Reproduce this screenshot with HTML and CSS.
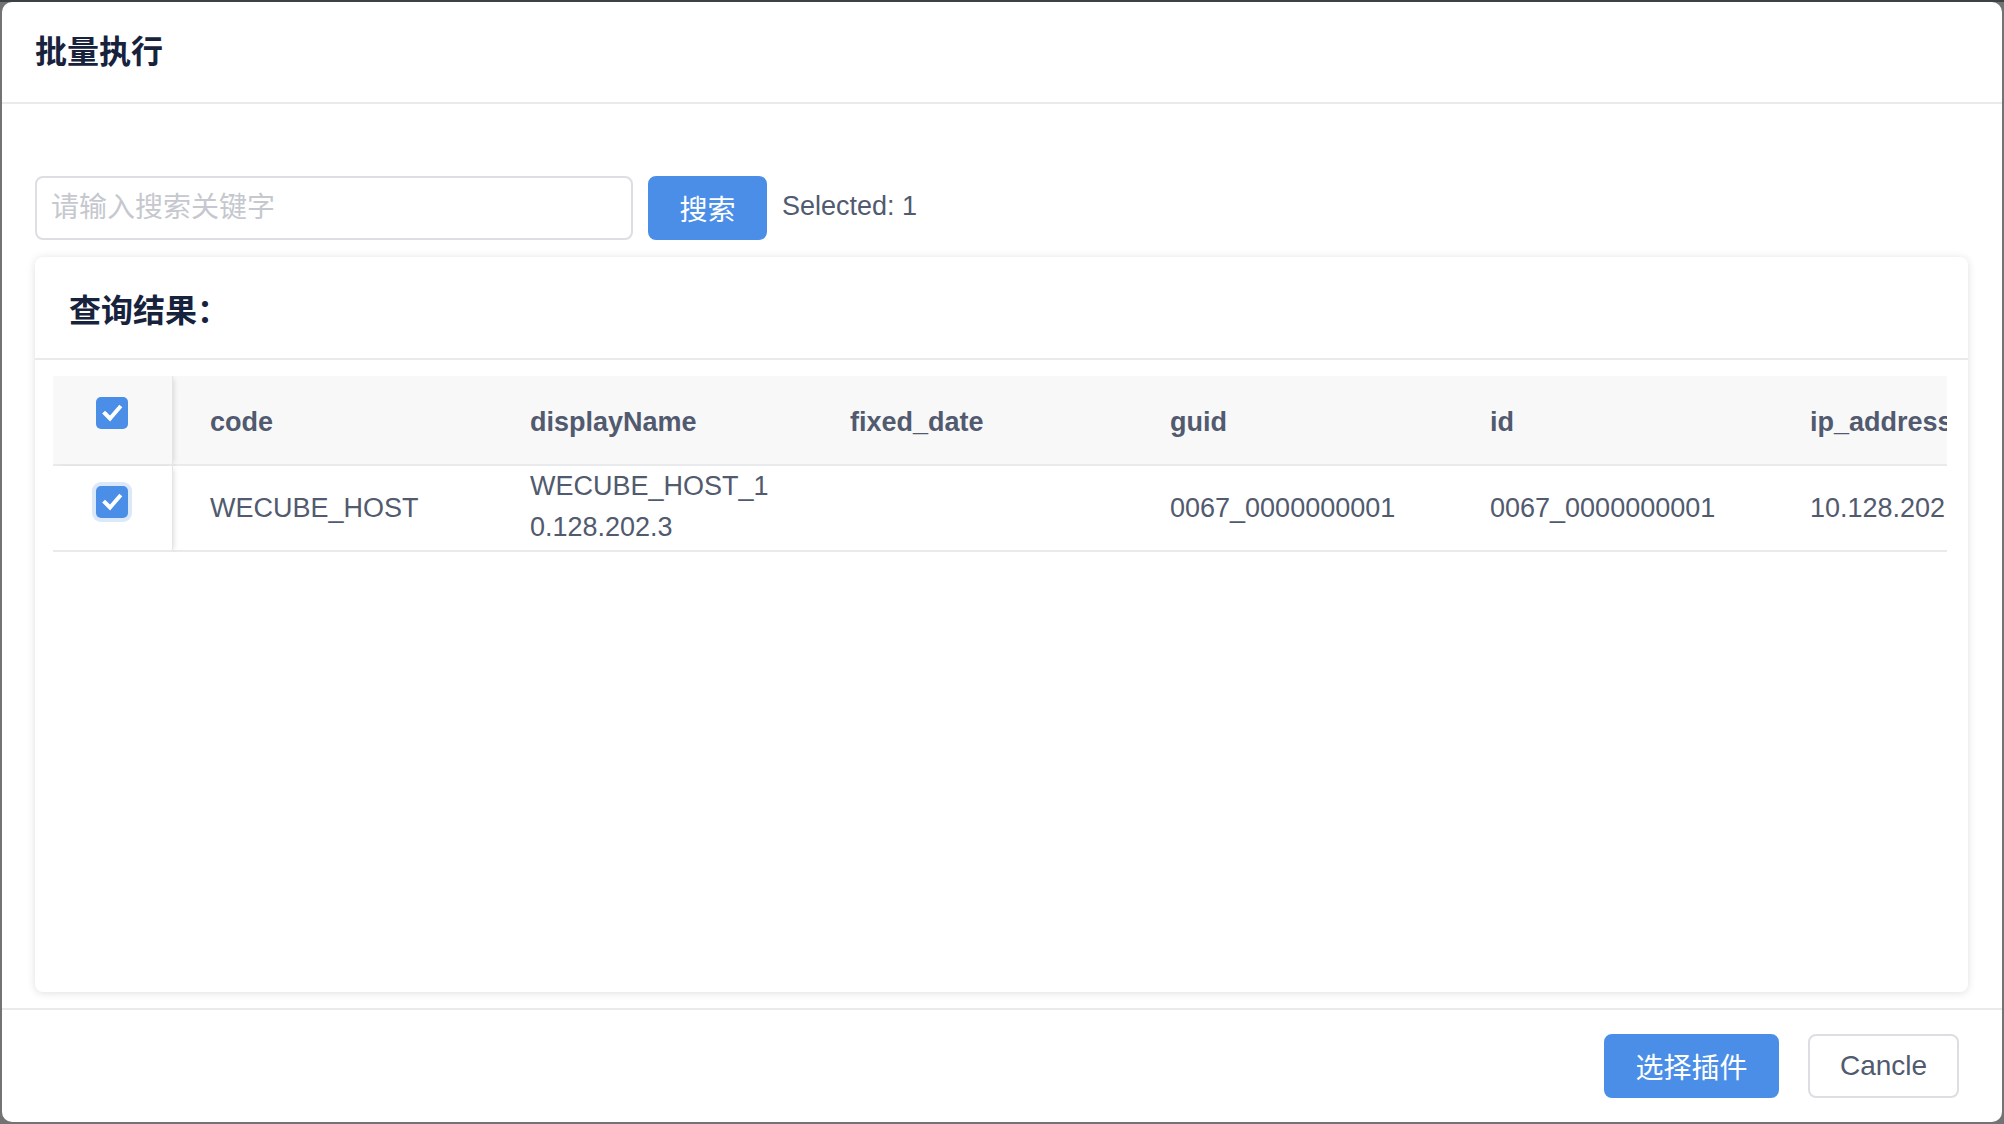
FILE: index.html
```html
<!DOCTYPE html>
<html lang="zh-CN">
<head>
<meta charset="utf-8">
<title>批量执行</title>
<link rel="stylesheet" href="styles.css">
</head>
<body>
<div class="modal">
  <div class="modal-header">
    <div class="modal-title">批量执行</div>
  </div>
  <div class="modal-body">
    <div class="search-row">
      <input class="search-input" type="text" placeholder="请输入搜索关键字">
      <button class="btn btn-primary btn-search">搜索</button>
      <span class="selected">Selected: 1</span>
    </div>
    <div class="card">
      <div class="card-head">查询结果：</div>
      <div class="card-body">
        <div class="table-wrap">
          <table class="table">
            <colgroup>
              <col class="col-sel">
              <col class="col-data"><col class="col-data"><col class="col-data">
              <col class="col-data"><col class="col-data"><col class="col-data">
            </colgroup>
            <thead>
              <tr>
                <th class="sel"><span class="checkbox"><svg viewBox="0 0 32 32" width="32" height="32"><path d="M9 16.5 L14 21.5 L23.5 10.5" fill="none" stroke="#fff" stroke-width="4" stroke-linecap="square"/></svg></span></th>
                <th>code</th>
                <th>displayName</th>
                <th>fixed_date</th>
                <th>guid</th>
                <th>id</th>
                <th>ip_address</th>
              </tr>
            </thead>
            <tbody>
              <tr>
                <td class="sel"><span class="checkbox focused"><svg viewBox="0 0 32 32" width="32" height="32"><path d="M9 16.5 L14 21.5 L23.5 10.5" fill="none" stroke="#fff" stroke-width="4" stroke-linecap="square"/></svg></span></td>
                <td>WECUBE_HOST</td>
                <td class="wrap">WECUBE_HOST_1<br>0.128.202.3</td>
                <td></td>
                <td>0067_0000000001</td>
                <td>0067_0000000001</td>
                <td>10.128.202.3</td>
              </tr>
            </tbody>
          </table>
        </div>
      </div>
    </div>
  </div>
  <div class="modal-footer">
    <button class="btn btn-primary btn-ok">选择插件</button>
    <button class="btn btn-default btn-cancel">Cancle</button>
  </div>
</div>
</body>
</html>
```
FILE: styles.css
```css
html, body {
  margin: 0;
  padding: 0;
}
body {
  background: #737373;
  border-top: 2px solid #3d4145;
  padding: 0 2px 2px 2px;
  font-family: "Liberation Sans", "Noto Sans CJK SC", sans-serif;
  color: #515a6e;
  overflow: hidden;
}
.modal {
  width: 2000px;
  height: 1120px;
  background: #fff;
  border-radius: 10px;
  display: flex;
  flex-direction: column;
  overflow: hidden;
}
.modal-header {
  height: 100px;
  border-bottom: 2px solid #e8eaec;
  display: flex;
  align-items: center;
  padding-left: 33px;
  flex: none;
}
.modal-title {
  font-size: 32px;
  font-weight: 600;
  color: #17233d;
  line-height: 1;
}
.modal-body {
  flex: 1;
  display: flex;
  flex-direction: column;
  padding: 72px 34px 16px 33px;
  min-height: 0;
}
.search-row {
  display: flex;
  align-items: center;
  height: 64px;
  flex: none;
}
.search-input {
  box-sizing: border-box;
  width: 598px;
  height: 64px;
  border: 2px solid #dcdee2;
  border-radius: 8px;
  padding: 0 14px;
  font-family: "Liberation Sans", "Noto Sans CJK SC", sans-serif;
  font-size: 28px;
  color: #515a6e;
  outline: none;
}
.search-input::placeholder {
  color: #c5c8ce;
}
.btn {
  box-sizing: border-box;
  height: 64px;
  border-radius: 8px;
  font-family: "Liberation Sans", "Noto Sans CJK SC", sans-serif;
  font-size: 28px;
  padding: 0;
  cursor: pointer;
}
.btn-primary {
  background: #4a8ee8;
  border: 2px solid #4a8ee8;
  color: #fff;
}
.btn-default {
  background: #fff;
  border: 2px solid #dcdee2;
  color: #515a6e;
}
.btn-search {
  width: 119px;
  margin-left: 15px;
}
.selected {
  margin-left: 15px;
  font-size: 27px;
  color: #515a6e;
  position: relative;
  top: -2px;
}
.card {
  margin-top: 17px;
  flex: 1;
  background: #fff;
  border-radius: 8px;
  box-shadow: 0 1px 9px rgba(0, 0, 0, 0.13);
  display: flex;
  flex-direction: column;
  min-height: 0;
}
.card-head {
  height: 101px;
  border-bottom: 2px solid #e8eaec;
  display: flex;
  align-items: center;
  padding-left: 34px;
  font-size: 32px;
  font-weight: 700;
  color: #17233d;
  flex: none;
}
.card-body {
  padding: 16px 21px 18px 18px;
  flex: 1;
}
.table-wrap {
  overflow: hidden;
  width: 100%;
}
.table {
  table-layout: fixed;
  border-collapse: separate;
  border-spacing: 0;
  width: 2040px;
  font-size: 27px;
  color: #515a6e;
}
.col-sel { width: 120px; }
.col-data { width: 320px; }
.table th,
.table td {
  padding: 0 37px;
  text-align: left;
  white-space: nowrap;
  overflow: hidden;
  border-bottom: 2px solid #e8eaec;
  box-sizing: border-box;
}
.table th {
  height: 90px;
  padding-top: 5px;
  background: #f8f8f9;
  font-weight: 700;
}
.table td {
  height: 85px;
  line-height: 41px;
}
.table td.wrap {
  white-space: normal;
  padding-bottom: 2px;
}
.table .sel {
  padding: 0;
  text-align: center;
  border-right: 1px solid #e4e6e9;
  box-shadow: 3px 0 6px -3px rgba(0, 0, 0, 0.18);
  position: relative;
}
.table td.sel {
  background: #fff;
}
.checkbox {
  display: inline-block;
  width: 32px;
  height: 32px;
  border-radius: 5px;
  background: #4a8ee8;
  vertical-align: middle;
  position: relative;
  top: -7px;
  left: -1px;
}
.checkbox svg {
  display: block;
}
.checkbox.focused {
  box-shadow: 0 0 0 4px rgba(74, 142, 232, 0.2);
}
.modal-footer {
  flex: none;
  height: 112px;
  border-top: 2px solid #e8eaec;
  display: flex;
  align-items: center;
  justify-content: flex-end;
  padding-right: 43px;
}
.btn-ok {
  width: 175px;
}
.btn-cancel {
  width: 151px;
  margin-left: 29px;
}
```
